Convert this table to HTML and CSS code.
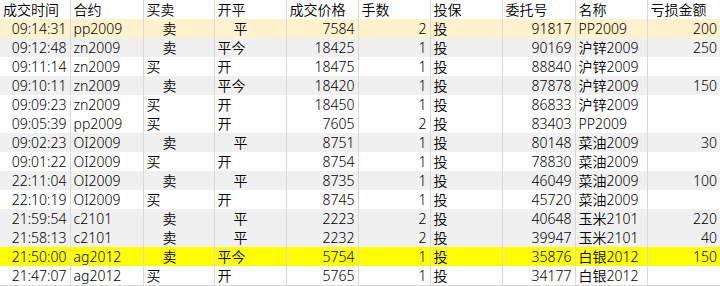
FILE: index.html
```html
<!DOCTYPE html>
<html lang="zh-CN">
<head>
<meta charset="utf-8">
<title>成交记录</title>
<link rel="stylesheet" href="styles.css">
</head>
<body>
<table class="grid">
  <colgroup>
    <col class="c1"><col class="c2"><col class="c3"><col class="c4"><col class="c5">
    <col class="c6"><col class="c7"><col class="c8"><col class="c9"><col class="c10">
  </colgroup>
  <thead>
    <tr><th>成交时间</th><th>合约</th><th>买卖</th><th>开平</th><th>成交价格</th><th>手数</th><th>投保</th><th>委托号</th><th>名称</th><th>亏损金额</th></tr>
  </thead>
  <tbody>
    <tr class="sel"><td class="r">09:14:31</td><td>pp2009</td><td class="ind">卖</td><td class="ind">平</td><td class="r">7584</td><td class="r">2</td><td>投</td><td class="r">91817</td><td>PP2009</td><td class="r">200</td></tr>
    <tr class="sell"><td class="r">09:12:48</td><td>zn2009</td><td class="ind">卖</td><td>平今</td><td class="r">18425</td><td class="r">1</td><td>投</td><td class="r">90169</td><td>沪锌2009</td><td class="r">250</td></tr>
    <tr><td class="r">09:11:14</td><td>zn2009</td><td>买</td><td>开</td><td class="r">18475</td><td class="r">1</td><td>投</td><td class="r">88840</td><td>沪锌2009</td><td class="r"></td></tr>
    <tr class="sell"><td class="r">09:10:11</td><td>zn2009</td><td class="ind">卖</td><td>平今</td><td class="r">18420</td><td class="r">1</td><td>投</td><td class="r">87878</td><td>沪锌2009</td><td class="r">150</td></tr>
    <tr><td class="r">09:09:23</td><td>zn2009</td><td>买</td><td>开</td><td class="r">18450</td><td class="r">1</td><td>投</td><td class="r">86833</td><td>沪锌2009</td><td class="r"></td></tr>
    <tr><td class="r">09:05:39</td><td>pp2009</td><td>买</td><td>开</td><td class="r">7605</td><td class="r">2</td><td>投</td><td class="r">83403</td><td>PP2009</td><td class="r"></td></tr>
    <tr class="sell"><td class="r">09:02:23</td><td>OI2009</td><td class="ind">卖</td><td class="ind">平</td><td class="r">8751</td><td class="r">1</td><td>投</td><td class="r">80148</td><td>菜油2009</td><td class="r">30</td></tr>
    <tr><td class="r">09:01:22</td><td>OI2009</td><td>买</td><td>开</td><td class="r">8754</td><td class="r">1</td><td>投</td><td class="r">78830</td><td>菜油2009</td><td class="r"></td></tr>
    <tr class="sell"><td class="r">22:11:04</td><td>OI2009</td><td class="ind">卖</td><td class="ind">平</td><td class="r">8735</td><td class="r">1</td><td>投</td><td class="r">46049</td><td>菜油2009</td><td class="r">100</td></tr>
    <tr><td class="r">22:10:19</td><td>OI2009</td><td>买</td><td>开</td><td class="r">8745</td><td class="r">1</td><td>投</td><td class="r">45720</td><td>菜油2009</td><td class="r"></td></tr>
    <tr class="sell"><td class="r">21:59:54</td><td>c2101</td><td class="ind">卖</td><td class="ind">平</td><td class="r">2223</td><td class="r">2</td><td>投</td><td class="r">40648</td><td>玉米2101</td><td class="r">220</td></tr>
    <tr class="sell"><td class="r">21:58:13</td><td>c2101</td><td class="ind">卖</td><td class="ind">平</td><td class="r">2232</td><td class="r">2</td><td>投</td><td class="r">39947</td><td>玉米2101</td><td class="r">40</td></tr>
    <tr class="warn"><td class="r">21:50:00</td><td>ag2012</td><td class="ind">卖</td><td>平今</td><td class="r">5754</td><td class="r">1</td><td>投</td><td class="r">35876</td><td>白银2012</td><td class="r">150</td></tr>
    <tr><td class="r">21:47:07</td><td>ag2012</td><td>买</td><td>开</td><td class="r">5765</td><td class="r">1</td><td>投</td><td class="r">34177</td><td>白银2012</td><td class="r"></td></tr>
  </tbody>
</table>
</body>
</html>
```
FILE: styles.css
```css
html, body {
  margin: 0;
  padding: 0;
  background: #ffffff;
}

.grid {
  table-layout: fixed;
  border-collapse: collapse;
  width: 720px;
  font-family: "Noto Sans", "Noto Sans CJK SC", sans-serif;
  font-size: 14px;
  font-weight: 350;
  color: #000000;
}

.c1 { width: 70px; }
.c2 { width: 73px; }
.c3 { width: 71px; }
.c4 { width: 72px; }
.c5 { width: 72px; }
.c6 { width: 72px; }
.c7 { width: 72px; }
.c8 { width: 73px; }
.c9 { width: 72px; }
.c10 { width: 73px; }

.grid th,
.grid td {
  height: 19px;
  line-height: 19px;
  padding: 0 3px;
  border-left: 1px solid #d9d9d9;
  white-space: nowrap;
  overflow: hidden;
  text-align: left;
  font-weight: inherit;
  box-sizing: border-box;
}

.grid th:first-child,
.grid td:first-child {
  border-left: none;
}

.grid tbody tr:last-child td {
  border-bottom: 1px solid #d9d9d9;
}

.grid td.r {
  text-align: right;
}

.grid td.ind {
  padding-left: 19px;
}

.grid tr.sell td {
  background: #f0f0f0;
}

.grid tr.sel td {
  background: #fff2cc;
}

.grid tr.warn td {
  background: #ffff00;
}
```
